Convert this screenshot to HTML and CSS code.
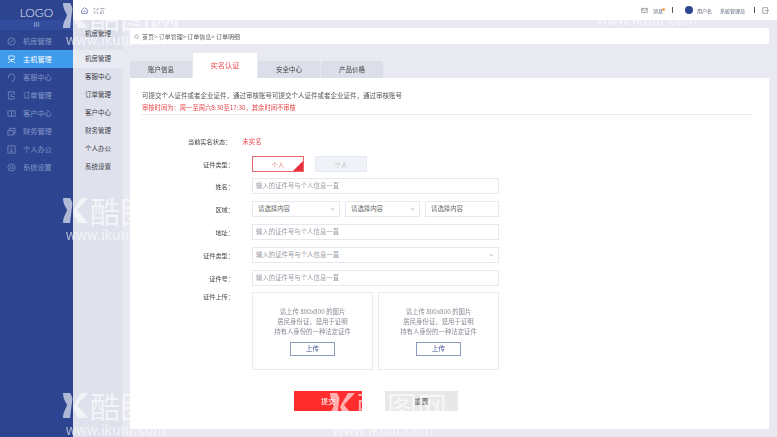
FILE: index.html
```html
<!DOCTYPE html>
<html>
<head>
<meta charset="utf-8">
<title>订单明细</title>
<link rel="stylesheet" href="styles.css">
</head>
<body>
<div class="app">
	<div class="sidebar">
		<div class="logo">LOGO</div>
		<div class="fold">III</div>
		<a class="nav"><svg viewBox="0 0 10 10"><circle cx="5" cy="5" r="4"/><path d="M3 6.500c1-2 3-2 4-3"/></svg>机房管理</a>
		<a class="nav active"><svg viewBox="0 0 10 10"><path d="M2 1h6v4H2zM5 5v2M1 9l2-2h4l2 2"/></svg>主机管理</a>
		<a class="nav"><svg viewBox="0 0 10 10"><path d="M1.500 6V4.500a3.500 3.500 0 0 1 7 0V6M8.500 6c0 2-1.500 3-3.500 3"/></svg>客服中心</a>
		<a class="nav"><svg viewBox="0 0 10 10"><path d="M8 4V1H1.500v8H8V7M4 4h2M4 6h4"/></svg>订单管理</a>
		<a class="nav"><svg viewBox="0 0 10 10"><path d="M1 2h8v6H1zM5 2v6"/></svg>客户中心</a>
		<a class="nav"><svg viewBox="0 0 10 10"><path d="M1 4h6v5H1zM3 4V1.500h6V7H7"/></svg>财务管理</a>
		<a class="nav"><svg viewBox="0 0 10 10"><path d="M1 1h8v8H1zM5 3v3M3.500 7h3"/></svg>个人办公</a>
		<a class="nav"><svg viewBox="0 0 10 10"><circle cx="5" cy="5" r="4"/><circle cx="5" cy="5" r="1.500"/></svg>系统设置</a>
	</div>
	<div class="right">
		<div class="topbar">
			<div class="home"><svg viewBox="0 0 10 10"><path d="M1 4l4-3 4 3v5H1z"/><path d="M3.500 6h3"/></svg>就首</div>
			<div class="tools">
				<svg class="tool-ico" viewBox="0 0 10 10"><path d="M1 2h8v6H1zM1 3l4 2.500L9 3"/></svg>
				<span class="msg">消息<i class="dot"></i></span>
				<span class="bar bar-1"></span>
				<i class="avatar"></i>
				<span class="user">用户名</span>
				<span class="admin">系统管理员</span>
				<span class="bar bar-2"></span>
				<svg class="tool-ico exit" viewBox="0 0 10 10"><path d="M8 3V1H1v8h7V7M4 5h5.500M7.500 3.500L9.500 5l-2 1.500"/></svg>
			</div>
		</div>
		<div class="below">
			<div class="submenu">
				<div class="sub-title">机房管理</div>
				<a class="sub sub-on">机房管理</a>
				<a class="sub">客服中心</a>
				<a class="sub">订单管理</a>
				<a class="sub">客户中心</a>
				<a class="sub">财务管理</a>
				<a class="sub">个人办公</a>
				<a class="sub">系统设置</a>
			</div>
			<div class="content">
				<div class="crumbs"><svg viewBox="0 0 10 10"><circle cx="5" cy="5" r="3.500"/><path d="M7.500 7.500L9 9"/></svg>首页&gt; 订单管理&gt; 订单信息&gt; 订单明细</div>
				<div class="tabs">
					<a class="tab">账户信息</a>
					<a class="tab tab-on">实名认证</a>
					<a class="tab">安全中心</a>
					<a class="tab">产品价格</a>
				</div>
				<div class="card">
					<p class="intro">可提交个人证件或者企业证件，通过审核账号可提交个人证件或者企业证件，通过审核账号</p>
					<p class="notice">审核时间为：周一至周六8:30至17:30，其余时间不审核</p>
					<div class="form">
						<div class="status-row">
							<label class="status-label">当前实名状态：</label>
							<span class="status-val">未实名</span>
						</div>
						<div class="row row-type">
							<label>证件类型：</label>
							<div class="type-btns">
								<a class="type type-on">个人</a>
								<a class="type">个人</a>
							</div>
						</div>
						<div class="row">
							<label>姓名：</label>
							<div class="input">输入的证件号与个人信息一直</div>
						</div>
						<div class="row row-area">
							<label>区域：</label>
							<div class="area">
								<div class="input select pick">请选择内容</div>
								<div class="input select pick">请选择内容</div>
								<div class="input pick">请选择内容</div>
							</div>
						</div>
						<div class="row">
							<label>地址：</label>
							<div class="input">输入的证件号与个人信息一直</div>
						</div>
						<div class="row">
							<label>证件类型：</label>
							<div class="input select">输入的证件号与个人信息一直</div>
						</div>
						<div class="row">
							<label>证件号：</label>
							<div class="input">输入的证件号与个人信息一直</div>
						</div>
						<div class="row row-upload">
							<label>证件上传：</label>
							<div class="uploads">
								<div class="upload">
									<p>请上传 800x800 的图片</p>
									<p>居民身份证，是用于证明</p>
									<p>持有人身份的一种法定证件</p>
									<a class="up-btn">上传</a>
								</div>
								<div class="upload">
									<p>请上传 800x800 的图片</p>
									<p>居民身份证，是用于证明</p>
									<p>持有人身份的一种法定证件</p>
									<a class="up-btn">上传</a>
								</div>
							</div>
						</div>
					</div>
					<div class="actions">
						<a class="submit">提交</a>
						<a class="reset">重置</a>
					</div>
				</div>
			</div>
		</div>
	</div>
</div>

<div class="mark mark-1"><svg viewBox="0 0 25 25"><path d="M0 0h7c2 3 3 6 2 9L7 25H0c0-6 3-9 4-13C3 9 0 6 0 0z"/><path d="M25 0L14 12l11 13H15L10 14l2-4 6-10z"/></svg><b>酷图网</b><em>www.ikutu.com</em></div>
<div class="mark mark-2"><svg viewBox="0 0 25 25"><path d="M0 0h7c2 3 3 6 2 9L7 25H0c0-6 3-9 4-13C3 9 0 6 0 0z"/><path d="M25 0L14 12l11 13H15L10 14l2-4 6-10z"/></svg><b>酷图网</b><em>www.ikutu.com</em></div>
<div class="mark mark-3"><svg viewBox="0 0 25 25"><path d="M0 0h7c2 3 3 6 2 9L7 25H0c0-6 3-9 4-13C3 9 0 6 0 0z"/><path d="M25 0L14 12l11 13H15L10 14l2-4 6-10z"/></svg><b>酷图网</b><em>www.ikutu.com</em></div>
<div class="mark mark-4"><svg viewBox="0 0 25 25"><path d="M0 0h7c2 3 3 6 2 9L7 25H0c0-6 3-9 4-13C3 9 0 6 0 0z"/><path d="M25 0L14 12l11 13H15L10 14l2-4 6-10z"/></svg><b>酷图网</b><em>www.ikutu.com</em></div>
<div class="mark mark-5"><em>www.ikutu.com</em></div>
</body>
</html>
```

FILE: styles.css
```css
html, body
{
	margin: 0;
	height: 100%;
	overflow: hidden;
}

body
{
	font-family: "Noto Sans CJK SC", "Liberation Sans", sans-serif;
	font-size: 6.500px;
	color: #555;
	background-color: #e9eaf1;
}

p
{
	margin: 0;
}

.app
{
	display: flex;
	width: 777px;
	height: 437px;
	filter: blur(.3px);
}

/* left nav */
.sidebar
{
	width: 73px;
	flex: none;
	background-color: #2d4591;
	color: #8496c8;
}

.logo
{
	height: 20px;
	line-height: 25px;
	text-align: center;
	font-family: "Lato", "Liberation Sans", sans-serif;
	font-size: 12px;
	font-weight: 300;
	color: #e4e8f4;
}

.fold
{
	height: 10px;
	line-height: 10px;
	margin-bottom: 2px;
	text-align: center;
	font-size: 6px;
	color: #b9c4e2;
	background-color: #324d9e;
}

.nav
{
	display: flex;
	align-items: center;
	gap: 7px;
	height: 18px;
	padding-left: 7px;
	font-size: 7.200px;
}

.nav svg
{
	width: 9px;
	height: 9px;
	fill: none;
	stroke: #8496c8;
	stroke-width: 0.8;
}

.active
{
	background-color: #3f9cec;
	color: #fff;
}

.active svg
{
	stroke: #fff;
}

.right
{
	flex: 1;
	min-width: 0;
	display: flex;
	flex-direction: column;
}

.topbar
{
	height: 20px;
	flex: none;
	display: flex;
	align-items: center;
	justify-content: space-between;
	padding: 0 8px;
	background-color: #fff;
}

.home
{
	display: flex;
	align-items: center;
	gap: 5px;
	font-size: 6px;
	color: #8a8d99;
}

.home svg
{
	width: 7px;
	height: 7px;
	fill: none;
	stroke: #4d5f9e;
}

.tools
{
	display: flex;
	align-items: center;
	font-size: 5px;
	color: #5a6077;
}

.tool-ico
{
	width: 7px;
	height: 7px;
	fill: none;
	stroke: #666;
	stroke-width: 0.8;
}

.msg
{
	position: relative;
	margin-left: 5px;
}

.dot
{
	position: absolute;
	top: 1px;
	right: -2px;
	width: 3px;
	height: 3px;
	border-radius: 50%;
	background-color: #f0a050;
}

.bar
{
	width: 1px;
	height: 6px;
	background-color: #555;
}

.bar-1
{
	margin-left: 9px;
}

.bar-2
{
	margin-left: 9px;
}

.avatar
{
	width: 8px;
	height: 8px;
	margin-left: 12px;
	border-radius: 50%;
	background-color: #2d4591;
}

.user
{
	margin-left: 4px;
}

.admin
{
	margin-left: 8px;
}

.exit
{
	margin-left: 7px;
}

.below
{
	flex: 1;
	min-height: 0;
	display: flex;
}

/* second menu */
.submenu
{
	width: 50px;
	flex: none;
	background-color: #dfe2ec;
	color: #3c3f4a;
	text-align: center;
}

.sub-title
{
	height: 30px;
	line-height: 26px;
}

.sub
{
	display: block;
	height: 18px;
	line-height: 17px;
}

.sub-on
{
	background-color: #e9ebf2;
}

.content
{
	flex: 1;
	min-width: 0;
	padding: 8px 8px 8px 7px;
	display: flex;
	flex-direction: column;
}

.crumbs
{
	height: 16px;
	flex: none;
	display: flex;
	align-items: center;
	gap: 3px;
	padding-left: 4px;
	font-size: 6px;
	background-color: #fff;
	color: #666;
}

.crumbs svg
{
	width: 5px;
	height: 5px;
	fill: none;
	stroke: #777;
}

.tabs
{
	display: flex;
	align-items: flex-end;
	height: 34px;
	flex: none;
	gap: 1px;
}

.tab
{
	width: 62px;
	height: 17px;
	line-height: 17px;
	text-align: center;
	color: #444;
	background-color: #dcdfe9;
}

.tab-on
{
	width: 64px;
	height: 25px;
	line-height: 25px;
	font-size: 7.200px;
	color: #e8474c;
	background-color: #fff;
}

.card
{
	flex: 1;
	padding: 11px 0 0;
	background-color: #fff;
}

.intro
{
	padding-left: 12px;
	line-height: 12px;
	color: #555;
}

.notice
{
	margin: 0 17px 0 12px;
	line-height: 13px;
	font-size: 6.300px;
	color: #e8474c;
	border-bottom: 1px solid #e9eaf0;
}

.form
{
	display: flex;
	flex-direction: column;
	margin-top: 20px;
	font-size: 6.200px;
}

.status-row
{
	display: flex;
	height: 13px;
	line-height: 13px;
	margin-bottom: 8px;
	padding-left: 58px;
}

.status-label
{
	color: #444;
	margin-right: 11px;
}

.status-val
{
	font-size: 6.500px;
	color: #e8474c;
}

.row
{
	display: flex;
	align-items: center;
	height: 16px;
	margin-bottom: 7px;
	padding-right: 270px;
}

.row > label
{
	width: 104px;
	margin-right: 18px;
	flex: none;
	text-align: right;
	color: #444;
}

.row-upload
{
	align-items: flex-start;
	height: 78px;
	margin-top: -1px;
	margin-bottom: 0;
}

.row-type
{
	margin-bottom: 6px;
}

.type-btns
{
	display: flex;
	gap: 11px;
}

.type
{
	position: relative;
	width: 52px;
	height: 16px;
	line-height: 15px;
	text-align: center;
	color: #b5b8c0;
	background-color: #eff2f6;
	box-sizing: border-box;
	border: 1px solid #e6e9ef;
}

.type-on
{
	color: #d98a8c;
	background-color: #fff;
	border-color: #e8656a;
	overflow: hidden;
}

.type-on::after
{
	content: "";
	position: absolute;
	right: 0;
	bottom: 0;
	border-style: solid;
	border-width: 0 0 10px 10px;
	border-color: transparent transparent #e8303a transparent;
}

.input
{
	flex: 1;
	height: 16px;
	line-height: 14px;
	box-sizing: border-box;
	padding-left: 3px;
	font-size: 6.400px;
	color: #9a9ca6;
	background-color: #fff;
	border: 1px solid #e6e8ee;
}

.select
{
	position: relative;
}

.select::after
{
	content: "";
	position: absolute;
	right: 5px;
	top: 5px;
	width: 2px;
	height: 2px;
	border-right: 1px solid #ccc;
	border-bottom: 1px solid #ccc;
	transform: rotate(45deg);
}

.area
{
	flex: 1;
	display: flex;
	gap: 5px;
}

.area .input:nth-child(1)
{
	flex: none;
	width: 88px;
}

.area .input:nth-child(2)
{
	flex: none;
	width: 75px;
}

.pick
{
	padding-left: 5px;
	color: #666;
}

.uploads
{
	flex: 1;
	display: flex;
	gap: 5px;
}

.upload
{
	flex: 1;
	height: 78px;
	box-sizing: border-box;
	padding-top: 14px;
	text-align: center;
	font-size: 6.400px;
	line-height: 10px;
	color: #8a8c96;
	border: 1px solid #e8eaf0;
}

.up-btn
{
	display: block;
	width: 45px;
	height: 14px;
	line-height: 12px;
	box-sizing: border-box;
	margin: 5px auto 0;
	color: #3c4f90;
	border: 1px solid #8e9abf;
}

.actions
{
	display: flex;
	gap: 23px;
	margin-top: 21px;
	padding-left: 164px;
}

.submit, .reset
{
	height: 20px;
	line-height: 20px;
	text-align: center;
	font-size: 7px;
}

.submit
{
	width: 68px;
	color: #fff;
	background-color: #ff2d2d;
}

.reset
{
	width: 73px;
	color: #555;
	background-color: #e8e8e8;
}

/* watermark over the page */
.mark
{
	position: absolute;
	width: 125px;
	color: rgba(255, 255, 255, .62);
	pointer-events: none;
}

.mark svg
{
	display: inline-block;
	width: 25px;
	height: 25px;
	fill: currentColor;
	vertical-align: top;
}

.mark b
{
	display: inline-block;
	margin-left: 2px;
	font-size: 30px;
	line-height: 25px;
	font-weight: 400;
	vertical-align: top;
}

.mark em
{
	display: block;
	margin-top: 5px;
	padding-left: 3px;
	font-family: "Liberation Sans", sans-serif;
	font-size: 14px;
	line-height: 15px;
	font-style: normal;
	letter-spacing: 0.500px;
}

.mark-1
{
	left: 63px;
	top: 198px;
}

.mark-2
{
	left: 63px;
	top: 393px;
}

.mark-3
{
	left: 63px;
	top: 3px;
}

.mark-4
{
	left: 330px;
	top: 393px;
}

.mark-5
{
	left: 594px;
	top: 8px;
}
```
